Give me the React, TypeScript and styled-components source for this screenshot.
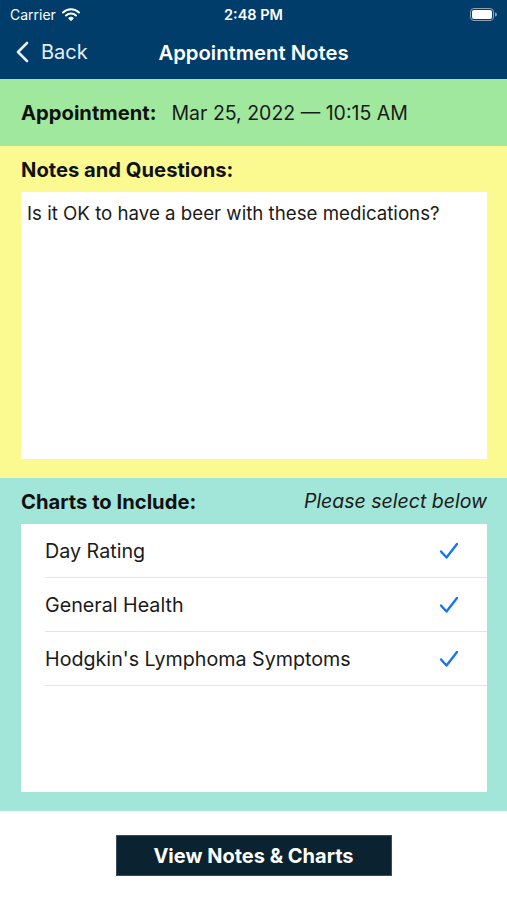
import React from 'react';
import styled, { createGlobalStyle } from 'styled-components';

const GlobalStyle = createGlobalStyle`
  html, body {
    margin: 0;
    padding: 0;
    background: #ffffff;
  }
  body {
    font-family: Inter, "Liberation Sans", Arial, sans-serif;
    color: #111;
  }
`;

const Screen = styled.div`
  width: 507px;
  height: 900px;
  display: flex;
  flex-direction: column;
  background: #ffffff;
`;

const Header = styled.header`
  background: #003d6b;
  color: #ffffff;
  height: 79px;
  display: flex;
  flex-direction: column;
`;

const StatusBar = styled.div`
  height: 28px;
  display: grid;
  grid-template-columns: 1fr auto 1fr;
  align-items: center;
  padding: 0 10px 0 10px;
  font-size: 14px;
`;

const StatusLeft = styled.div`
  display: flex;
  align-items: center;
  gap: 6px;
`;

const StatusTime = styled.div`
  font-weight: 600;
  font-size: 14.5px;
`;

const StatusRight = styled.div`
  display: flex;
  justify-content: flex-end;
`;

const NavBar = styled.div`
  flex: 1;
  position: relative;
  display: flex;
  align-items: center;
  justify-content: center;
  padding-bottom: 3px;
`;

const BackButton = styled.div`
  position: absolute;
  left: 16px;
  top: 12px;
  display: flex;
  align-items: center;
  gap: 12px;
  font-size: 20px;
  color: #e8eef4;
`;

const Title = styled.h1`
  margin: 0;
  font-size: 20.3px;
  font-weight: 600;
`;

const Band = styled.section<{ $bg: string }>`
  background: ${(p) => p.$bg};
  padding: 0 20px 0 21px;
`;

const AppointmentBand = styled(Band)`
  height: 67px;
  display: flex;
  align-items: center;
  gap: 15px;
  font-size: 19.5px;
`;

const Label = styled.span`
  font-weight: 700;
  font-size: 20.2px;
  color: #111;
`;

const Value = styled.span`
  color: #1a1a1a;
`;

const NotesBand = styled(Band)`
  height: 332px;
  display: flex;
  flex-direction: column;
  padding-top: 12px;
  padding-bottom: 19px;
  box-sizing: border-box;
`;

const SectionHead = styled.div`
  display: flex;
  justify-content: space-between;
  align-items: center;
  height: 22px;
  margin-bottom: 12px;
  font-size: 19.5px;
`;

const Italic = styled.span`
  font-style: italic;
  color: #1a1a1a;
`;

const NoteBox = styled.div`
  flex: 1;
  background: #ffffff;
  padding: 11px 6px;
  font-size: 18.7px;
  color: #1a1a1a;
  line-height: 22px;
`;

const ChartsBand = styled(Band)`
  height: 333px;
  display: flex;
  flex-direction: column;
  padding-top: 12px;
  padding-bottom: 19px;
  box-sizing: border-box;
`;

const ChartList = styled.div`
  flex: 1;
  background: #ffffff;
  display: flex;
  flex-direction: column;
`;

const ChartRow = styled.div`
  height: 53px;
  margin-left: 24px;
  padding-right: 28px;
  display: flex;
  align-items: center;
  justify-content: space-between;
  border-bottom: 1px solid #e4e4e4;
  font-size: 19.7px;
  color: #1a1a1a;
`;

const Footer = styled.div`
  flex: 1;
  display: flex;
  justify-content: center;
  padding-top: 24px;
`;

const ActionButton = styled.button`
  width: 276px;
  height: 41px;
  background: #0b2230;
  color: #ffffff;
  border: 1px solid #3a4d58;
  font-family: Inter, "Liberation Sans", Arial, sans-serif;
  font-size: 20px;
  font-weight: 700;
  cursor: pointer;
`;

const Check = () => (
  <svg width="20" height="18" viewBox="0 0 20 18">
    <path d="M2 9.5 L7.5 15.5 L18 2" fill="none" stroke="#1a74f0" strokeWidth="2.4" strokeLinecap="round" strokeLinejoin="round" />
  </svg>
);

const Wifi = () => (
  <svg width="18" height="13" viewBox="0 0 18 13">
    <path d="M1 4.5 A11.5 11.5 0 0 1 17 4.5" fill="none" stroke="#fff" strokeWidth="2" strokeLinecap="round" />
    <path d="M4 7.5 A7 7 0 0 1 14 7.5" fill="none" stroke="#fff" strokeWidth="2" strokeLinecap="round" />
    <path d="M6.6 10.3 A3.3 3.3 0 0 1 11.4 10.3 L9 12.6 Z" fill="#fff" stroke="#fff" strokeWidth="1" strokeLinejoin="round" />
  </svg>
);

const Battery = () => (
  <svg width="27" height="13" viewBox="0 0 27 13">
    <rect x="0.5" y="0.5" width="23" height="12" rx="3.5" fill="none" stroke="#8aa3b8" strokeWidth="1" />
    <rect x="2" y="2" width="20" height="9" rx="2" fill="#ffffff" />
    <path d="M25 4.5 A2 2 0 0 1 25 8.5 Z" fill="#8aa3b8" />
  </svg>
);

const Chevron = () => (
  <svg width="13" height="22" viewBox="0 0 13 22">
    <path d="M11 2 L2 11 L11 20" fill="none" stroke="#e8eef4" strokeWidth="2.6" strokeLinecap="round" strokeLinejoin="round" />
  </svg>
);

const charts = ['Day Rating', 'General Health', "Hodgkin's Lymphoma Symptoms"];

export default function App() {
  return (
    <>
      <GlobalStyle />
      <Screen>
        <Header>
          <StatusBar>
            <StatusLeft>
              <span>Carrier</span>
              <Wifi />
            </StatusLeft>
            <StatusTime>2:48 PM</StatusTime>
            <StatusRight>
              <Battery />
            </StatusRight>
          </StatusBar>
          <NavBar>
            <BackButton>
              <Chevron />
              <span>Back</span>
            </BackButton>
            <Title>Appointment Notes</Title>
          </NavBar>
        </Header>

        <AppointmentBand $bg="#a0e89e">
          <Label>Appointment:</Label>
          <Value>Mar 25, 2022 — 10:15 AM</Value>
        </AppointmentBand>

        <NotesBand $bg="#fafa90">
          <SectionHead>
            <Label>Notes and Questions:</Label>
          </SectionHead>
          <NoteBox>Is it OK to have a beer with these medications?</NoteBox>
        </NotesBand>

        <ChartsBand $bg="#a2e6da">
          <SectionHead>
            <Label>Charts to Include:</Label>
            <Italic>Please select below</Italic>
          </SectionHead>
          <ChartList>
            {charts.map((c) => (
              <ChartRow key={c}>
                <span>{c}</span>
                <Check />
              </ChartRow>
            ))}
          </ChartList>
        </ChartsBand>

        <Footer>
          <ActionButton>View Notes &amp; Charts</ActionButton>
        </Footer>
      </Screen>
    </>
  );
}
